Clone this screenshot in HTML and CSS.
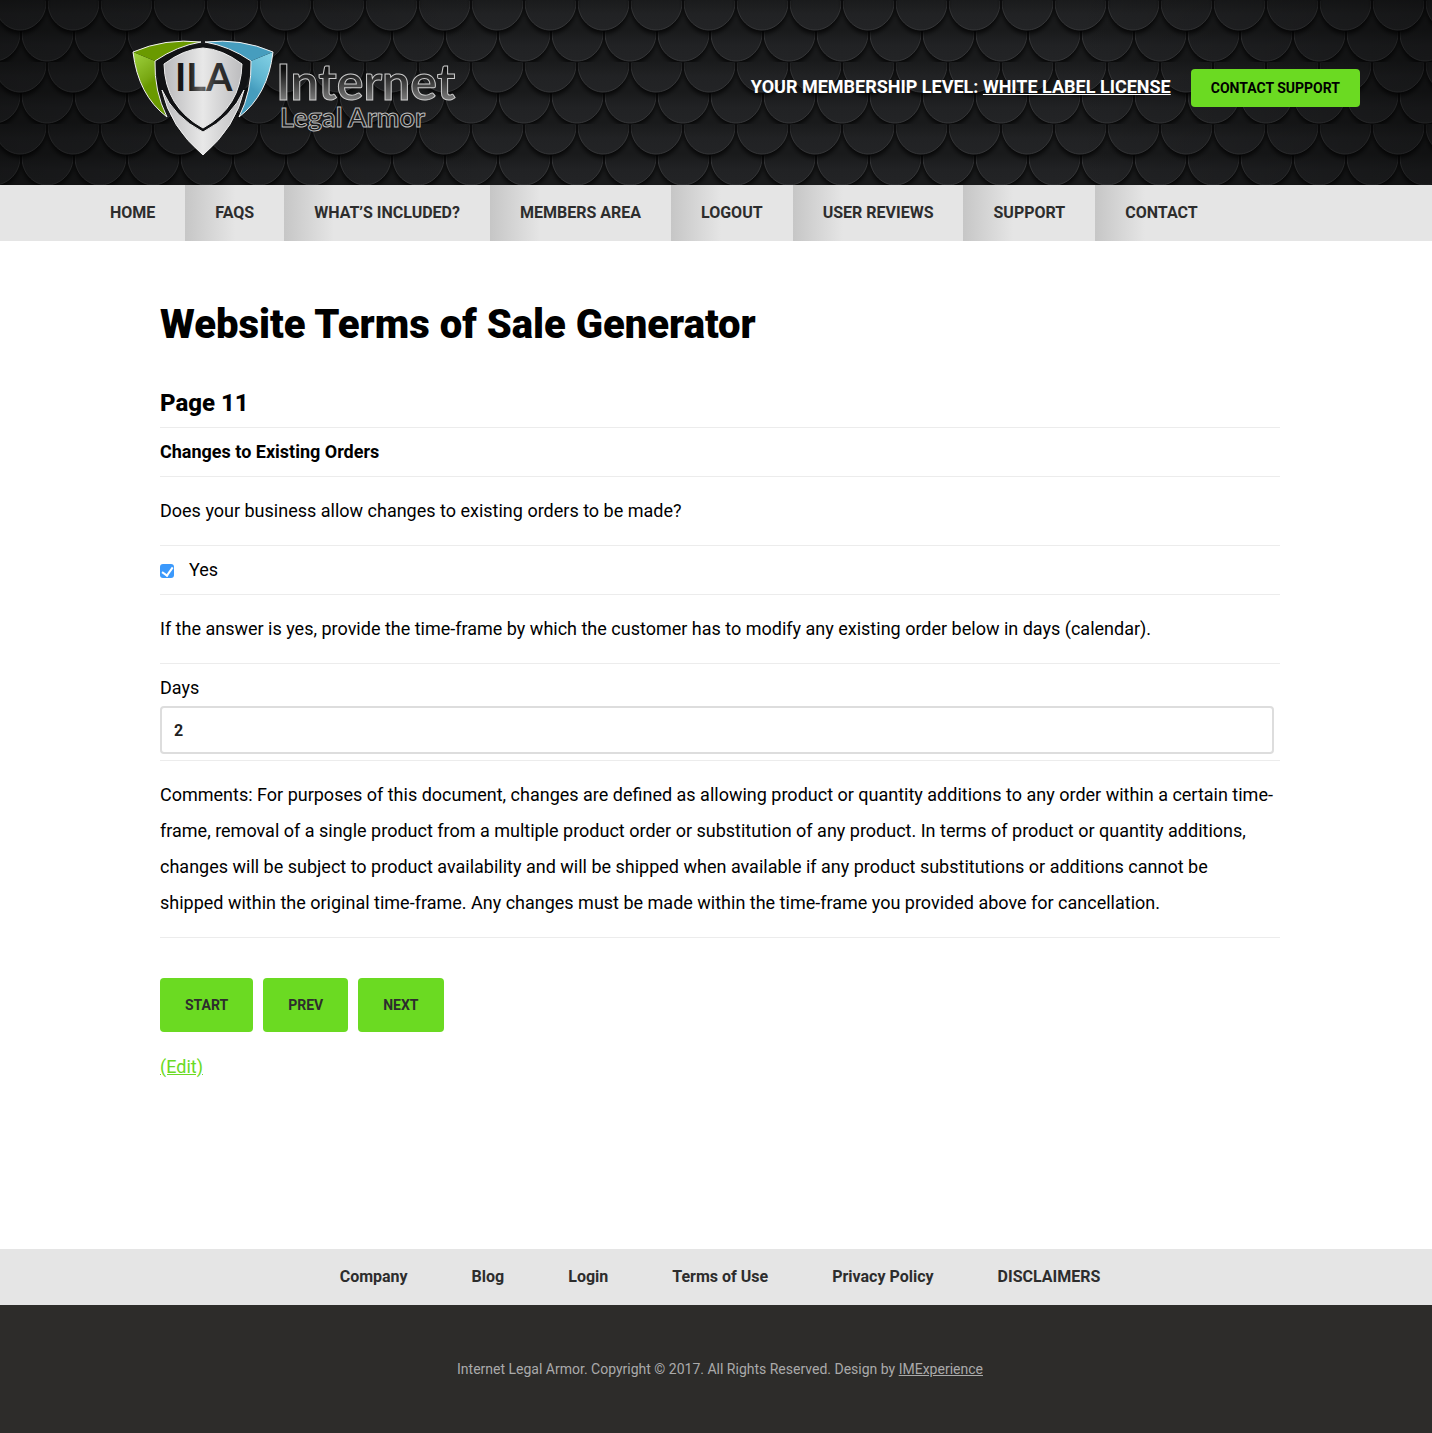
FILE: index.html
```
<!DOCTYPE html>
<html lang="en">
<head>
    <meta charset="UTF-8">
    <meta name="viewport" content="width=device-width, initial-scale=1.0">
    <title>Website Terms of Sale Generator</title>
    <link rel="stylesheet" href="styles.css">
</head>
<body>
    <!-- Header -->
    <header class="header">
        <svg class="header-bg" aria-hidden="true">
            <defs>
                <linearGradient id="scale-fill" x1="0" y1="0" x2="0" y2="1">
                    <stop offset="0.5" stop-color="#191a1b"/>
                    <stop offset="0.75" stop-color="#212224"/>
                    <stop offset="1" stop-color="#232426"/>
                </linearGradient>
                <linearGradient id="shade" x1="0" y1="0" x2="1" y2="0">
                    <stop offset="0" stop-color="#000" stop-opacity="0.35"/>
                    <stop offset="0.35" stop-color="#000" stop-opacity="0"/>
                    <stop offset="0.75" stop-color="#000" stop-opacity="0"/>
                    <stop offset="1" stop-color="#000" stop-opacity="0.35"/>
                </linearGradient>
                <filter id="soft" x="-20%" y="-20%" width="140%" height="140%">
                    <feGaussianBlur stdDeviation="2"/>
                </filter>
                <g id="scale">
                    <path d="M0 -6V6C1 23 13 34 26 34S52 23 53 6V-6Z" fill="#000" fill-opacity="0.7" filter="url(#soft)"/>
                    <path d="M1 -33V4C2 20 14 30 26 30S51 20 52 4V-33Z" fill="url(#scale-fill)"/>
                    <path d="M1 1V4C2 20 14 30 26 30S51 20 52 4V1" fill="none" stroke="#343537"/>
                    <path d="M0 -1V8M53 -1V8" stroke="#0b0b0c" stroke-width="2"/>
                </g>
                <pattern id="scales" x="-6" y="0" width="53" height="62" patternUnits="userSpaceOnUse">
                    <use href="#scale" x="0" y="62"/>
                    <use href="#scale" x="-26" y="31"/>
                    <use href="#scale" x="27" y="31"/>
                    <use href="#scale" x="0" y="0"/>
                    <use href="#scale" x="-53" y="0"/>
                    <use href="#scale" x="53" y="0"/>
                </pattern>
            </defs>
            <rect width="100%" height="100%" fill="url(#scales)"/>
            <rect width="100%" height="100%" fill="url(#shade)"/>
        </svg>
        <div class="header-inner">
            <a href="#" class="logo">
                <svg width="350" height="130" viewBox="0 0 350 130" role="img" aria-label="Internet Legal Armor">
                    <defs>
                        <linearGradient id="silver" x1="0" y1="0" x2="1" y2="0">
                            <stop offset="0" stop-color="#b9b9bb"/>
                            <stop offset="0.5" stop-color="#e8e8e8"/>
                            <stop offset="1" stop-color="#bcbcbe"/>
                        </linearGradient>
                        <linearGradient id="green" x1="0" y1="0" x2="0.4" y2="1">
                            <stop offset="0" stop-color="#a0d340"/>
                            <stop offset="0.5" stop-color="#78a712"/>
                            <stop offset="0.6" stop-color="#6a9a00"/>
                        </linearGradient>
                        <linearGradient id="blue" x1="1" y1="0" x2="0.6" y2="1">
                            <stop offset="0" stop-color="#86d3e6"/>
                            <stop offset="0.5" stop-color="#5eb4d0"/>
                            <stop offset="0.7" stop-color="#469dbe"/>
                        </linearGradient>
                        <linearGradient id="letters" x1="0" y1="0" x2="1" y2="0">
                            <stop offset="0" stop-color="#111"/>
                            <stop offset="0.25" stop-color="#1b1b1b"/>
                            <stop offset="0.45" stop-color="#666"/>
                            <stop offset="0.7" stop-color="#333"/>
                            <stop offset="1" stop-color="#222"/>
                        </linearGradient>
                        <linearGradient id="chrome" x1="0" y1="0" x2="0" y2="1">
                            <stop offset="0.3" stop-color="#0d0d0d"/>
                            <stop offset="0.8" stop-color="#777"/>
                        </linearGradient>
                    </defs>
                    <path d="M35 31Q57 16 83 14Q109 16 131 31Q128 80 83 105Q38 80 35 31Z" fill="#111214"/>
                    <path d="M42 60Q54 87 83 102Q112 87 124 60Q116 97 83 125Q50 97 42 60Z" fill="url(#silver)" stroke="#eee"/>
                    <path d="M44 34Q64 19 83 18Q102 19 122 34Q121 77 83 98Q45 77 44 34Z" fill="url(#silver)" stroke="#eee"/>
                    <path d="M13 22L35 31Q34 61 47 87Q18 65 13 22Z" fill="url(#green)"/>
                    <path d="M13 22Q45 8 81 12Q57 16 35 31Z" fill="#6a9a00"/>
                    <path d="M13 22Q45 8 81 12Q57 16 35 31Q34 61 47 87Q18 65 13 22Z" fill="none" stroke="#f2f2f2"/>
                    <path d="M153 22L131 31Q132 61 119 87Q148 65 153 22Z" fill="url(#blue)"/>
                    <path d="M153 22Q121 8 85 12Q109 16 131 31Z" fill="#469dbe"/>
                    <path d="M153 22Q121 8 85 12Q109 16 131 31Q132 61 119 87Q148 65 153 22Z" fill="none" stroke="#f2f2f2"/>
                    <text x="55" y="61" class="logo-mark">ILA</text>
                    <text x="156" y="70" class="logo-name">Internet</text>
                    <text x="160" y="97" class="logo-sub">Legal Armor</text>
                </svg>
            </a>
            <div class="member">
                <p class="member-level">YOUR MEMBERSHIP LEVEL: <a href="#">WHITE LABEL LICENSE</a></p>
                <a href="#" class="btn-support">CONTACT SUPPORT</a>
            </div>
        </div>
    </header>
    <!-- Main Menu -->
    <nav class="menu">
        <a href="#">HOME</a>
        <a href="#">FAQS</a>
        <a href="#">WHAT’S INCLUDED?</a>
        <a href="#">MEMBERS AREA</a>
        <a href="#">LOGOUT</a>
        <a href="#">USER REVIEWS</a>
        <a href="#">SUPPORT</a>
        <a href="#">CONTACT</a>
    </nav>
    <!-- Generator Form -->
    <main class="content">
        <h1>Website Terms of Sale Generator</h1>
        <form>
            <h2>Page 11</h2>
            <div class="row"><h3>Changes to Existing Orders</h3></div>
            <div class="row">
                <p>Does your business allow changes to existing orders to be made?</p>
            </div>
            <div class="row check-row">
                <input type="checkbox" id="allow" checked>
                <label for="allow">Yes</label>
            </div>
            <div class="row">
                <p>If the answer is yes, provide the time-frame by which the customer has to modify any existing order below in days (calendar).</p>
            </div>
            <div class="row">
                <label for="days" class="field-label">Days</label>
                <input type="text" id="days" value="2">
            </div>
            <div class="row">
                <p>Comments: For purposes of this document, changes are defined as allowing product or quantity additions to any order within a certain time-frame, removal of a single product from a multiple product order or substitution of any product. In terms of product or quantity additions, changes will be subject to product availability and will be shipped when available if any product substitutions or additions cannot be shipped within the original time-frame. Any changes must be made within the time-frame you provided above for cancellation.</p>
            </div>
            <div class="buttons">
                <button type="button">START</button>
                <button type="button">PREV</button>
                <button type="button">NEXT</button>
            </div>
        </form>
        <a href="#" class="edit">(Edit)</a>
    </main>
    <!-- Footer -->
    <nav class="footer-menu">
        <a href="#">Company</a>
        <a href="#">Blog</a>
        <a href="#">Login</a>
        <a href="#">Terms of Use</a>
        <a href="#">Privacy Policy</a>
        <a href="#">DISCLAIMERS</a>
    </nav>
    <footer class="footer">
        <p>Internet Legal Armor. Copyright © 2017. All Rights Reserved. Design by <a href="#">IMExperience</a></p>
    </footer>
</body>
</html>
```
FILE: styles.css
```
* {
    box-sizing: border-box;
}
body {
    font-family: Roboto, sans-serif;
    font-size: 18px;
    line-height: 36px;
    margin: 0;
    color: #000;
    background: #fff;
}
h1, h2, h3, p {
    margin: 0;
}
/* Header */
.header {
    position: relative;
    background: #1c1d1f;
}
.header-bg {
    position: absolute;
    top: 0;
    left: 0;
    width: 100%;
    height: 100%;
}
.header-inner {
    position: relative;
    display: flex;
    justify-content: space-between;
    align-items: flex-start;
    padding: 30px 72px 25px 120px;
}
.logo svg {
    display: block;
}
.logo-mark {
    font: bold 38px Lato, sans-serif;
    fill: url(#letters);
}
.logo-name {
    font: bold 50px Lato, sans-serif;
    fill: url(#chrome);
    stroke: #ccc;
}
.logo-sub {
    font: bold 27px Lato, sans-serif;
    fill: #1c1c1c;
    stroke: #bbb;
}
.member {
    display: flex;
    gap: 20px;
    padding-top: 39px;
}
.member-level {
    color: #fff;
    font-weight: bold;
}
.member-level a {
    color: #fff;
}
.btn-support {
    padding: 0 20px;
    border-radius: 4px;
    background: #6bda22;
    color: #000;
    font-size: 14px;
    font-weight: bold;
    line-height: 38px;
    text-decoration: none;
}
/* Main Menu */
.menu {
    display: flex;
    padding: 0 72px 0 80px;
    background: #e5e5e5;
}
.menu a {
    padding: 0 30px;
    color: #2d2d2d;
    font-size: 16px;
    font-weight: bold;
    line-height: 56px;
    text-decoration: none;
}
.menu a + a {
    background: linear-gradient(to right, #c6c6c6, #e5e5e5 50px);
}
/* Content */
.content {
    padding: 60px 152px 164px 160px;
}
h1 {
    font-size: 40px;
    font-weight: 900;
    line-height: 48px;
}
h2 {
    margin-top: 36px;
    padding-bottom: 6px;
    border-bottom: 1px solid #ececec;
    font-size: 24px;
    font-weight: 800;
    line-height: 36px;
}
h3 {
    font-size: 18px;
}
.row {
    padding: 6px 6px 6px 0;
    border-bottom: 1px solid #ececec;
}
.row p {
    margin: 10px 0;
}
.check-row {
    display: flex;
    align-items: center;
    gap: 15px;
}
.check-row input {
    appearance: none;
    display: grid;
    place-items: center;
    width: 14px;
    height: 14px;
    margin: 2px 0 0;
    border-radius: 3px;
    background: #3b99fc;
}
.check-row input:checked::before {
    content: "";
    width: 5px;
    height: 9px;
    margin-bottom: 2px;
    border: solid #fff;
    border-width: 0 2px 2px 0;
    transform: rotate(35deg);
}
.field-label {
    display: block;
}
#days {
    display: block;
    width: 100%;
    height: 48px;
    padding: 0 12px;
    border: 2px solid #ddd;
    border-radius: 4px;
    color: #222;
    font: bold 16px Roboto, sans-serif;
}
.buttons {
    display: flex;
    gap: 10px;
    margin: 40px 0 17px;
}
button {
    height: 54px;
    padding: 0 25px;
    border: none;
    border-radius: 4px;
    background: #6bda22;
    color: #2d2d2d;
    font: bold 14px Roboto, sans-serif;
    cursor: pointer;
}
.edit {
    color: #6bda22;
}
/* Footer */
.footer-menu {
    display: flex;
    justify-content: center;
    gap: 64px;
    padding-left: 8px;
    background: #e5e5e5;
}
.footer-menu a {
    color: #2d2d2d;
    font-size: 16px;
    font-weight: bold;
    line-height: 56px;
    text-decoration: none;
}
.footer {
    padding: 46px 0 46px 8px;
    background: #2d2c2a;
    color: #aaa;
    font-size: 14px;
    text-align: center;
}
.footer a {
    color: #aaa;
}
```
